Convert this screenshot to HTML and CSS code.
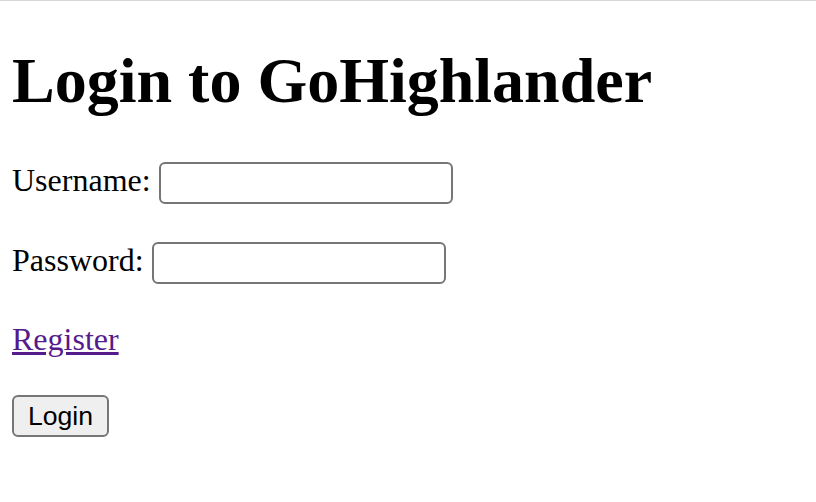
FILE: index.html
```html
<!DOCTYPE html>
<html>
<head>
<meta charset="utf-8">
<title>Login to GoHighlander</title>
<link rel="stylesheet" href="styles.css">
</head>
<body>
<h1 class="title">Login to GoHighlander</h1>
<form class="login-form">
  <div class="row row-user">
    <label class="label" for="username">Username:</label>
    <input class="field" type="text" id="username" name="username">
  </div>
  <div class="row row-pass">
    <label class="label" for="password">Password:</label>
    <input class="field" type="password" id="password" name="password">
  </div>
  <p class="register"><a class="register-link" href="#">Register</a></p>
  <div class="actions"><button class="btn" type="submit">Login</button></div>
</form>
</body>
</html>
```
FILE: styles.css
```css
html, body {
  background: #ffffff;
}
body {
  margin: 0;
  padding: 0 12px;
  border-top: 1px solid #d6d6d6;
  font-family: "Liberation Serif", "Times New Roman", serif;
  font-size: 32px;
  color: #000;
}
.title {
  margin: 43px 0 0 0;
  font-size: 64px;
  line-height: 74px;
  font-weight: bold;
}
.login-form {
  margin: 44px 0 0 0;
  display: flex;
  flex-direction: column;
  align-items: flex-start;
}
.row {
  display: flex;
  align-items: flex-start;
  gap: 8px;
  height: 41px;
}
.row-pass {
  margin-top: 39px;
}
.label {
  line-height: 36px;
}
.field {
  box-sizing: border-box;
  width: 294px;
  height: 42px;
  margin: 0;
  border: 2px solid #767676;
  border-radius: 6px;
  background: #fff;
  font-family: "Liberation Sans", Arial, sans-serif;
  font-size: 26px;
  padding: 2px 4px;
}
.register {
  margin: 38px 0 0 0;
  line-height: 36px;
}
.register-link {
  color: #551a8b;
  text-decoration: underline;
}
.actions {
  margin-top: 38px;
}
.btn {
  box-sizing: border-box;
  width: 97px;
  height: 42px;
  margin: 0;
  padding: 0;
  border: 2px solid #767676;
  border-radius: 6px;
  background: #efefef;
  font-family: "Liberation Sans", Arial, sans-serif;
  font-size: 26.6px;
  color: #000;
  display: flex;
  align-items: center;
  justify-content: center;
}
```
